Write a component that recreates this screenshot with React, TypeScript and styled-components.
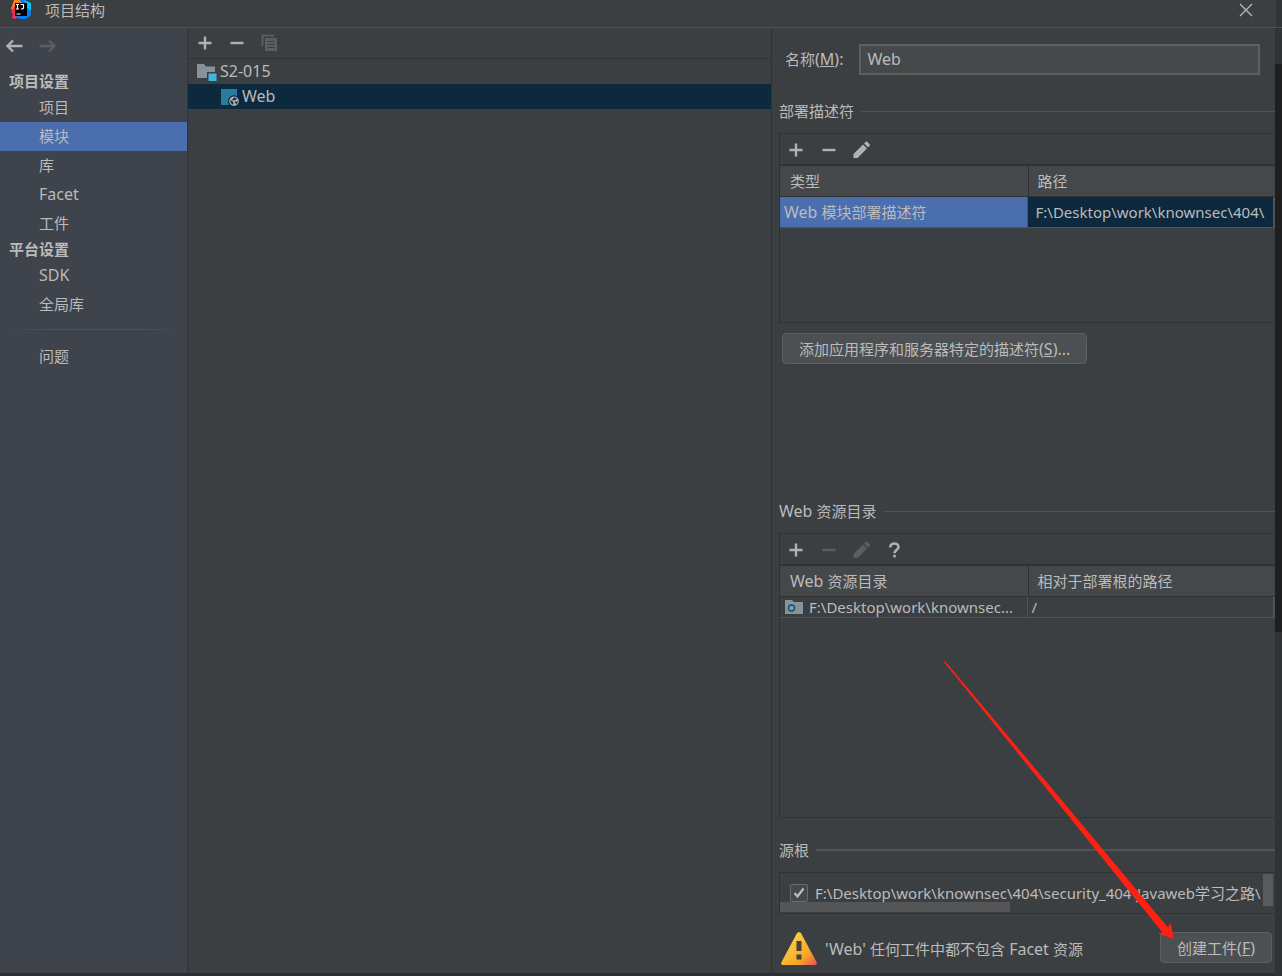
import React from "react";
import styled, { createGlobalStyle } from "styled-components";

const line = "#323232";

const GlobalStyle = createGlobalStyle`
  *, *::before, *::after { box-sizing: border-box; }
  body {
    margin: 0;
    background: #3c3f41;
    color: #bbbbbb;
    font: 15px/20px "Noto Sans", "Noto Sans CJK SC", sans-serif;
  }
  button, input { font: inherit; color: inherit; }
  ul { list-style: none; margin: 0; padding: 0; }
`;

const Shell = styled.div`
  display: grid;
  grid-template-columns: minmax(0, 1fr) 7px;
  grid-template-rows: 28px 1fr;
  min-height: 100vh;
`;

const TitleBar = styled.header`
  grid-column: 1 / -1;
  display: flex;
  align-items: center;
  gap: 14px;
  padding: 0 27px 8px 11px;
  border-bottom: 1px solid #515151;
  background: linear-gradient(90deg, #3c3f41 calc(100% - 6px), #333435 0);
`;

const Title = styled.h1`
  flex: 1;
  margin: 0;
  font-size: 15px;
  line-height: 20px;
  font-weight: 400;
`;

const Latin = styled.span`
  font-size: 16px;
  line-height: 16px;
`;

const IconButton = styled.button`
  display: grid;
  place-items: center;
  width: 18px;
  height: 18px;
  padding: 0;
  border: 0;
  background: none;
  color: ${(p) => (p.disabled ? "#5b5d5f" : "#afb1b3")};
`;

const Body = styled.main`
  display: flex;
  min-width: 0;
  border-bottom: 3px solid #2d2f30;
`;

const Edge = styled.div`
  background: #303233;
  padding-top: 36px;
`;

const EdgeDark = styled.div`
  height: 568px;
  background: #1f1f1f;
`;

const Sidebar = styled.nav`
  flex: none;
  width: 188px;
  border-right: 1px solid ${line};
  background: #3e434c;
`;

const History = styled.div`
  display: flex;
  gap: 15px;
  padding: 9px 6px 15px;
`;

const NavHeading = styled.h2`
  margin: 0;
  padding-left: 9px;
  font-size: 15px;
  line-height: 23px;
  font-weight: 700;
`;

const NavItem = styled.button<{ $active?: boolean }>`
  display: block;
  width: 100%;
  height: 29px;
  padding: 0 0 2px 39px;
  border: 0;
  text-align: left;
  background: ${(p) => (p.$active ? "#4b6eaf" : "none")};
`;

const NavRule = styled.hr`
  height: 1px;
  margin: 10px 8px 12px;
  border: 0;
  background: linear-gradient(90deg, transparent, #515151 20%, #515151 80%, transparent);
`;

const TreePane = styled.section`
  flex: 583 1 0;
  min-width: 0;
  border-right: 1px solid ${line};
`;

const TreeTools = styled.div`
  display: flex;
  align-items: center;
  gap: 14px;
  height: 31px;
  padding: 0 0 1px 8px;
  border-bottom: 1px solid ${line};
`;

const TreeItem = styled.li<{ $depth: number; $selected?: boolean }>`
  display: flex;
  align-items: center;
  gap: 3px;
  height: 25px;
  padding-left: ${(p) => 9 + p.$depth * 24}px;
  background: ${(p) => (p.$selected ? "#0d293e" : "none")};
  span { padding-bottom: 1px; }
`;

const Details = styled.section`
  position: relative;
  flex: 496 1 0;
  min-width: 0;
  padding-left: 7px;
`;

const NameRow = styled.div`
  display: flex;
  align-items: center;
  gap: 16px;
  padding: 16px 15px 0 6px;
  label { padding-bottom: 2px; }
`;

const NameInput = styled.input`
  flex: 1;
  min-width: 0;
  height: 31px;
  padding: 0 6px 1px;
  border: 2px solid #5e6060;
  outline: 0;
  background: #45494a;
  font-size: 16px;
`;

const SectionTitle = styled.h2<{ $top: number; $thick?: boolean }>`
  display: flex;
  align-items: center;
  gap: 7px;
  margin: ${(p) => p.$top}px 0 12px;
  font-size: 15px;
  line-height: 20px;
  font-weight: 400;
  &::after {
    content: "";
    flex: 1;
    height: ${(p) => (p.$thick ? 2 : 1)}px;
    background: #515354;
  }
`;

const Box = styled.div<{ $height: number }>`
  min-height: ${(p) => p.$height}px;
  border: solid ${line};
  border-width: 1px 0 1px 1px;
  overflow: hidden;
`;

const BoxTools = styled.div`
  display: flex;
  align-items: center;
  gap: 15px;
  height: 32px;
  padding: 1px 0 0 7px;
  border-bottom: 2px solid ${line};
`;

const Table = styled.table`
  width: 100%;
  table-layout: fixed;
  border-collapse: separate;
  border-spacing: 0;
`;

const HeadCell = styled.th`
  height: 31px;
  padding: 0 10px;
  border-bottom: 1px solid ${line};
  background: #45484a;
  font-weight: 400;
  text-align: left;
  &:first-child { width: calc(50% - 1px); }
  & + & { border-left: 1px solid ${line}; padding-left: 9px; }
`;

const Cell = styled.td<{ $bg?: string; $height: number; $pad: number }>`
  height: ${(p) => p.$height}px;
  padding: 0 0 0 ${(p) => p.$pad}px;
  border-right: 1px solid #515354;
  border-bottom: 1px solid #515354;
  background: ${(p) => p.$bg ?? "none"};
  white-space: nowrap;
  overflow: hidden;
  text-overflow: ellipsis;
  &:last-child { border-right-width: 2px; }
  svg { margin-right: 6px; vertical-align: -1px; }
`;

const PushButton = styled.button`
  flex: none;
  height: 31px;
  padding: 0 16px;
  border: 1px solid #5e6060;
  border-radius: 4px;
  background: #4c5052;
  white-space: nowrap;
`;

const ButtonLine = styled.div`
  display: flex;
  padding: 10px 3px 0;
`;

const RootsBox = styled.div`
  position: relative;
  height: 42px;
  padding: 10px 0 0 10px;
  border: solid ${line};
  border-width: 1px 0 1px 1px;
  overflow: hidden;
`;

const RootLabel = styled.label`
  display: flex;
  align-items: center;
  gap: 7px;
  white-space: nowrap;
`;

const Check = styled.input`
  appearance: none;
  flex: none;
  width: 18px;
  height: 18px;
  margin: 0;
  border: 1px solid #6b6b6b;
  border-radius: 2px;
  background: #43494a
    url("data:image/svg+xml,%3Csvg xmlns='http://www.w3.org/2000/svg' viewBox='0 0 16 16'%3E%3Cpath d='M3.500 8l3 3.500 6-8' fill='none' stroke='%23bbbbbb' stroke-width='2.200'/%3E%3C/svg%3E");
`;

const HThumb = styled.div`
  position: absolute;
  left: 0;
  bottom: 1px;
  width: 230px;
  height: 10px;
  background: #595b5ccc;
`;

const VThumb = styled.div`
  position: absolute;
  right: 2px;
  top: 1px;
  width: 10px;
  height: 32px;
  background: #6a6c6d99;
`;

const Warning = styled.div`
  display: flex;
  align-items: flex-start;
  gap: 8px;
  padding: 18px 3px 7px 2px;
  p { flex: 1; margin: 7px 0 0; white-space: nowrap; }
`;

const Pointer = styled.svg`
  position: absolute;
  left: 174px;
  top: 634px;
  overflow: visible;
  pointer-events: none;
`;

const Icon = ({ children, size = 18 }: { children: React.ReactNode; size?: number }) => (
  <svg width={size} height={size} viewBox="0 0 18 18" fill="none" aria-hidden="true">
    {children}
  </svg>
);
const Plus = () => <Icon><path d="M9 2.500v13M2.500 9h13" stroke="currentColor" strokeWidth="2.400" /></Icon>;
const Minus = () => <Icon><path d="M2.500 9h13" stroke="currentColor" strokeWidth="2.400" /></Icon>;
const Pencil = () => (
  <Icon>
    <path d="M.5 17v-4L10 3.500l4 4L4.500 17zM11.100 2.400L12.800.8q.7-.6 1.400 0l2.500 2.500q.6.700 0 1.400l-1.600 1.700z" fill="currentColor" />
  </Icon>
);
const Copy = () => (
  <Icon>
    <path d="M2.500 12V1.500H14" stroke="currentColor" strokeWidth="2" />
    <path d="M5 4h12v13H5z" fill="currentColor" />
    <path d="M7.500 7.500h7M7.500 10.500h7M7.500 13.500h7" stroke="#3c3f41" />
  </Icon>
);
const Help = () => (
  <Icon>
    <path d="M4.200 6.500C4.200 1.300 12.500 1.300 12.500 6c0 3-4 3.200-4 6.200" stroke="currentColor" strokeWidth="2.500" />
    <path d="M7.200 13.800h2.600v2.600H7.200z" fill="currentColor" />
  </Icon>
);
const Arrow = ({ flip }: { flip?: boolean }) => (
  <Icon>
    <path d={flip ? "M.5 9h15M10 3.500L15.500 9 10 14.500" : "M16.500 9h-15M7 3.500L1.500 9 7 14.500"} stroke="currentColor" strokeWidth="2.300" />
  </Icon>
);
const Close = () => <Icon><path d="M3 3l12 12M15 3L3 15" stroke="#bbbbbb" strokeWidth="1.200" /></Icon>;

const Logo = () => (
  <svg width="20" height="20" viewBox="0 0 20 20" aria-hidden="true">
    <path d="M3 0h6l4 5-3 9-8 4 1-7-3-2z" fill="#fc801d" />
    <path d="M0 12l5-8 7 5-7 10-4-1 1-4z" fill="#fe2857" />
    <path d="M9 0h5l5 3 1 12-5 4H9l-4-2 8-9z" fill="#087cfa" />
    <path d="M13 0l7 3v8l-4-4z" fill="#07c3f2" />
    <path d="M4 3h12v13H4z" fill="#000" />
    <path d="M5 4.500h3M6.500 4.500v4.500M5 9h3M9.500 4.500h3V8q0 1-2.500 1M5.500 14h4" fill="none" stroke="#fff" strokeWidth="1.200" />
  </svg>
);
const Folder = () => (
  <svg width="20" height="18" viewBox="0 0 20 18" aria-hidden="true">
    <path d="M0 1h7l2 2.500h9V15H0z" fill="#87939a" />
    <path d="M10 9h10v9H10z" fill="#3c3f41" />
    <path d="M11.500 10.500h8V18h-8z" fill="#40b6e0" />
  </svg>
);
const WebModule = () => (
  <svg width="18" height="18" viewBox="0 0 18 18" aria-hidden="true">
    <path d="M0 1h16v16H0z" fill="#2b7b9f" />
    <circle cx="13" cy="13.200" r="6" fill="#0d293e" />
    <circle cx="13" cy="13.200" r="4.800" fill="#a5adb3" />
    <path d="M9.300 12l3 2v2.500q-3-.7-3-4.500zM13.500 9.300l2.700 1.700-1.700.5-1.500 1-2-.5zM14 13.500h2.800q-.3 2-1.800 2.700z" fill="#0d293e" />
  </svg>
);
const WebFolder = () => (
  <svg width="18" height="14" viewBox="0 0 18 14" aria-hidden="true">
    <path d="M0 0h7l2 2h9v12H0z" fill="#87939a" />
    <circle cx="6.500" cy="8" r="3" fill="#40b6e0" stroke="#34444c" strokeWidth="1.400" />
  </svg>
);
const Alert = () => (
  <svg width="36" height="33" viewBox="0 0 36 33" aria-hidden="true">
    <defs>
      <linearGradient id="amber" x1="0" y1="0" x2="1" y2="1">
        <stop offset=".3" stopColor="#fcc845" />
        <stop offset=".7" stopColor="#f5a623" />
        <stop offset="1" stopColor="#e8505b" />
      </linearGradient>
    </defs>
    <path d="M15.800 1.500q2.200-3 4.400 0l15.300 28.500q1 3-1.500 3H2q-2.500 0-1.500-3z" fill="url(#amber)" />
    <path d="M15.500 9h5v10h-5zM15.500 22.500h5v5h-5z" fill="#45423c" />
  </svg>
);

const settings = ["项目", "模块", "库", "Facet", "工件"];
const platform = ["SDK", "全局库"];

const NavText = ({ text }: { text: string }) => (/^\w+$/.test(text) ? <Latin>{text}</Latin> : <>{text}</>);

export default function App() {
  return (
    <Shell>
      <GlobalStyle />
      <TitleBar>
        <Logo />
        <Title>项目结构</Title>
        <IconButton aria-label="关闭"><Close /></IconButton>
      </TitleBar>
      <Body>
        <Sidebar>
          <History>
            <IconButton aria-label="后退"><Arrow /></IconButton>
            <IconButton aria-label="前进" disabled><Arrow flip /></IconButton>
          </History>
          <NavHeading>项目设置</NavHeading>
          {settings.map((s) => <NavItem key={s} $active={s === "模块"}><NavText text={s} /></NavItem>)}
          <NavHeading>平台设置</NavHeading>
          {platform.map((s) => <NavItem key={s}><NavText text={s} /></NavItem>)}
          <NavRule />
          <NavItem>问题</NavItem>
        </Sidebar>
        <TreePane>
          <TreeTools>
            <IconButton aria-label="添加"><Plus /></IconButton>
            <IconButton aria-label="移除"><Minus /></IconButton>
            <IconButton aria-label="复制" disabled><Copy /></IconButton>
          </TreeTools>
          <ul>
            <TreeItem $depth={0}><Folder /><Latin>S2-015</Latin></TreeItem>
            <TreeItem $depth={1} $selected><WebModule /><Latin>Web</Latin></TreeItem>
          </ul>
        </TreePane>
        <Details>
          <NameRow>
            <label htmlFor="name">名称<Latin>(<u>M</u>):</Latin></label>
            <NameInput id="name" defaultValue="Web" />
          </NameRow>
          <SectionTitle $top={26}>部署描述符</SectionTitle>
          <Box $height={190}>
            <BoxTools>
              <IconButton aria-label="添加"><Plus /></IconButton>
              <IconButton aria-label="移除"><Minus /></IconButton>
              <IconButton aria-label="编辑"><Pencil /></IconButton>
            </BoxTools>
            <Table>
              <thead><tr><HeadCell>类型</HeadCell><HeadCell>路径</HeadCell></tr></thead>
              <tbody>
                <tr>
                  <Cell $height={31} $pad={4} $bg="#4b6eaf"><Latin>Web </Latin>模块部署描述符</Cell>
                  <Cell $height={31} $pad={8} $bg="#0d293e">F:\Desktop\work\knownsec\404\</Cell>
                </tr>
              </tbody>
            </Table>
          </Box>
          <ButtonLine>
            <PushButton>添加应用程序和服务器特定的描述符<Latin>(<u>S</u>)...</Latin></PushButton>
          </ButtonLine>
          <SectionTitle $top={137}><span><Latin>Web </Latin>资源目录</span></SectionTitle>
          <Box $height={285}>
            <BoxTools>
              <IconButton aria-label="添加"><Plus /></IconButton>
              <IconButton aria-label="移除" disabled><Minus /></IconButton>
              <IconButton aria-label="编辑" disabled><Pencil /></IconButton>
              <IconButton aria-label="帮助"><Help /></IconButton>
            </BoxTools>
            <Table>
              <thead><tr><HeadCell><Latin>Web </Latin>资源目录</HeadCell><HeadCell>相对于部署根的路径</HeadCell></tr></thead>
              <tbody>
                <tr>
                  <Cell $height={21} $pad={5}><WebFolder />F:\Desktop\work\knownsec...</Cell>
                  <Cell $height={21} $pad={4}>/</Cell>
                </tr>
              </tbody>
            </Table>
          </Box>
          <SectionTitle $top={22} $thick>源根</SectionTitle>
          <RootsBox>
            <HThumb />
            <VThumb />
            <RootLabel>
              <Check type="checkbox" defaultChecked />
              F:\Desktop\work\knownsec\404\security_404\Javaweb学习之路\
            </RootLabel>
          </RootsBox>
          <Warning>
            <Alert />
            <p><Latin>'Web' </Latin>任何工件中都不包含<Latin> Facet </Latin>资源</p>
            <PushButton>创建工件<Latin>(<u>F</u>)</Latin></PushButton>
          </Warning>
          <Pointer width="230" height="280" viewBox="0 0 230 280" aria-hidden="true">
            <path d="M-1-1L116 138.500 222 265.500 224.500 260.500 228 277 212 271.500 216.500 270.500 112 141 -2 0z" fill="#ff2014" />
          </Pointer>
        </Details>
      </Body>
      <Edge><EdgeDark /></Edge>
    </Shell>
  );
}
